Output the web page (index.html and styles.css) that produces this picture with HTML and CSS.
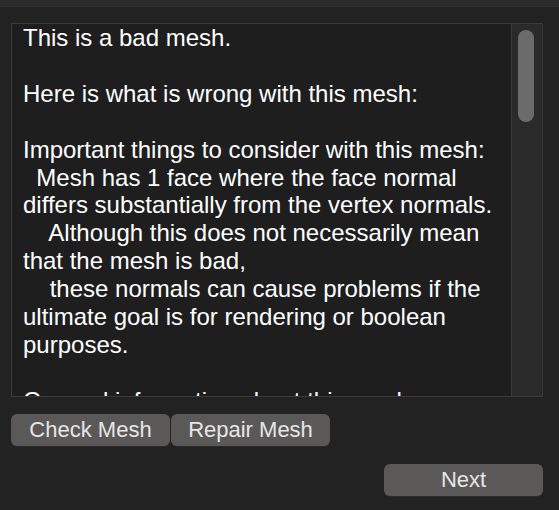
FILE: index.html
```html
<!DOCTYPE html>
<html>
<head>
<meta charset="utf-8">
<link rel="stylesheet" href="styles.css">
</head>
<body>
<div class="topbar"></div>
<div class="panel">
  <div class="report">
    <div class="report-text">This is a bad mesh.

Here is what is wrong with this mesh:

Important things to consider with this mesh:
  Mesh has 1 face where the face normal
differs substantially from the vertex normals.
    Although this does not necessarily mean
that the mesh is bad,
    these normals can cause problems if the
ultimate goal is for rendering or boolean
purposes.

General information about this mesh:</div>
    <div class="scrolltrack"><div class="thumb"></div></div>
  </div>
  <div class="actions">
    <button class="btn">Check Mesh</button>
    <button class="btn">Repair Mesh</button>
  </div>
  <div class="footer">
    <button class="btn">Next</button>
  </div>
</div>
</body>
</html>
```
FILE: styles.css
```css
html, body {
  margin: 0;
  padding: 0;
  background: #232222;
  width: 559px;
  height: 510px;
  overflow: hidden;
  font-family: "Liberation Sans", Arial, sans-serif;
}
.topbar {
  height: 6px;
  background: #2c2c2c;
  border-bottom: 1px solid #333232;
}
.panel {
  padding: 16px 16px 0 11px;
  display: flex;
  flex-direction: column;
}
.report {
  display: flex;
  height: 372px;
  border: 1px solid #3a3a3a;
  background: #1e1e1e;
  overflow: hidden;
}
.report-text {
  flex: 1;
  white-space: pre;
  color: #ffffff;
  font-size: 24px;
  line-height: 27.9px;
  padding: 0 0 0 11px;
  overflow: hidden;
}
.scrolltrack {
  width: 28px;
  background: #2a2a2a;
  border-left: 1px solid #3a3a3a;
  border-right: 1px solid #262626;
  padding: 6px 0 0 6px;
  box-sizing: border-box;
  width: 31px;
}
.thumb {
  width: 16px;
  height: 92px;
  border-radius: 8px;
  background: #6b6b6b;
}
.actions {
  display: flex;
  gap: 1px;
  margin-top: 17px;
}
.btn {
  width: 159px;
  height: 32px;
  border: none;
  border-radius: 6px;
  background: #5a5958;
  color: #e6e6e6;
  font-family: "Liberation Sans", Arial, sans-serif;
  font-size: 22px;
  padding: 0;
  margin: 0;
  box-shadow: 0 1px 0 #2b2b2b;
}
.footer {
  display: flex;
  justify-content: flex-end;
  margin-top: 18px;
}
```
